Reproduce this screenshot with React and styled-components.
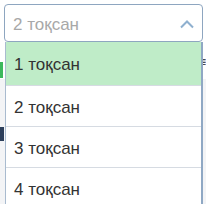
import styled, { createGlobalStyle } from 'styled-components';

const Global = createGlobalStyle`
body {
  margin: 0;
  background: #fff;
  font-family: "Liberation Sans", Arial, sans-serif;
}
`;

const Page = styled.div`
position: relative;
width: 206px;
height: 204px;
overflow: hidden;
`;

const Field = styled.div`
position: relative;
z-index: 1;
margin: 4px 3px 0 4px;
`;

const Control = styled.div`
box-sizing: border-box;
height: 38px;
border: 1px solid #8ea6c0;
border-radius: 4px;
display: flex;
align-items: center;
justify-content: space-between;
padding: 3px 8px 0 8px;
`;

const Placeholder = styled.span`
color: #a8a8a8;
font-size: 17px;
`;

const Row = styled.div`
display: flex;
justify-content: space-between;
align-items: flex-start;
height: ${p => p.h}px;
background: ${p => p.bg};
`;

const Mark = styled.div`
width: ${p => p.w}px;
height: ${p => p.h}px;
margin-top: ${p => p.top}px;
background: ${p => p.c};
`;

const Glyph = styled.span`
margin-top: 14px;
font-size: 12px;
line-height: 1;
color: #222;
`;

const Menu = styled.ul`
position: absolute;
top: 38px;
left: 1px;
right: 0;
margin: 0;
padding: 0;
list-style: none;
background: #fff;
border-left: 1px solid #a9bbcf;
border-right: 2px solid #8fa8c4;
`;

const Option = styled.li`
box-sizing: border-box;
height: ${p => (p.first ? 43 : 41)}px;
display: flex;
align-items: center;
padding: 3px 0 0 8px;
font-size: 17px;
color: #333;
background: ${p => (p.active ? '#bfecc8' : '#fff')};
border-top: ${p => (p.first ? 'none' : '1px solid #d6dbe2')};
`;

const Chevron = () => (
  <svg width="14" height="9" viewBox="0 0 14 9">
    <polyline points="1,7.5 7,1.5 13,7.5" fill="none" stroke="#8fb0cf" strokeWidth="2" />
  </svg>
);

const options = ['1 тоқсан', '2 тоқсан', '3 тоқсан', '4 тоқсан'];

export default function App() {
  return (
    <Page>
      <Global />
      <Field>
        <Control>
          <Placeholder>2 тоқсан</Placeholder>
          <Chevron />
        </Control>
        <Menu>
          {options.map((o, i) => (
            <Option key={o} first={i === 0} active={i === 0}>{o}</Option>
          ))}
        </Menu>
      </Field>
      <Row h={37} bg="#fff">
        <Mark c="#3cb85c" w={3} h={16} top={20} />
        <Glyph>≡</Glyph>
      </Row>
      <Row h={125} bg="#f3f4f6">
        <Mark c="#2c3e5a" w={4} h={14} top={48} />
      </Row>
    </Page>
  );
}
